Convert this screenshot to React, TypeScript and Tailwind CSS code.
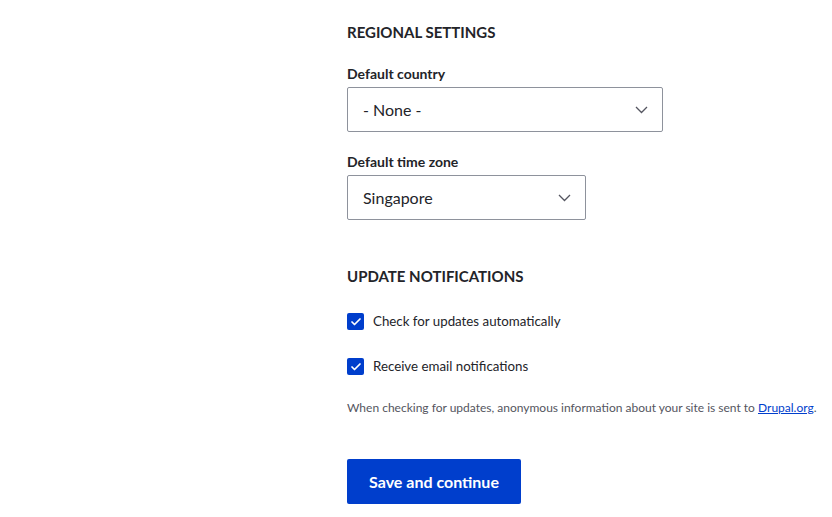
import { Check } from "lucide-react"

function SelectBox({ value, width }: { value: string; width: string }) {
  return (
    <div className={`${width} flex h-[45px] items-center justify-between rounded-[2px] border border-[#8e929c] bg-white pl-[15px] pr-[14px]`}>
      <span className="text-[16px] text-[#232429]">{value}</span>
      <svg width="13" height="8" viewBox="0 0 13 8" fill="none">
        <polyline points="1,1 6.5,6.5 12,1" stroke="#545560" strokeWidth="1.3" />
      </svg>
    </div>
  )
}

function CheckRow({ label }: { label: string }) {
  return (
    <div className="flex h-[17px] items-center gap-[9px]">
      <span className="flex h-[17px] w-[17px] items-center justify-center rounded-[2px] bg-[#003ecc]">
        <Check className="h-[12px] w-[12px] text-white" strokeWidth={3.5} />
      </span>
      <span className="text-[13.3px] leading-[17px] text-[#232429]">{label}</span>
    </div>
  )
}

export default function App() {
  return (
    <div className="min-h-[517px] w-[832px] bg-white font-['Lato',sans-serif] text-[#232429]">
      <div className="pl-[347px] pt-[21px]">
        <h2 className="text-[15px] font-bold leading-[22px]">REGIONAL SETTINGS</h2>

        <div className="mt-[22px]">
          <p className="mb-[4px] text-[14px] font-bold leading-[18px]">Default country</p>
          <SelectBox value="- None -" width="w-[316px]" />
        </div>

        <div className="mt-[21px]">
          <p className="mb-[4px] text-[14px] font-bold leading-[18px]">Default time zone</p>
          <SelectBox value="Singapore" width="w-[239px]" />
        </div>

        <h2 className="mt-[45px] text-[15px] font-bold leading-[22px]">UPDATE NOTIFICATIONS</h2>

        <div className="mt-[26px] flex flex-col gap-[28px]">
          <CheckRow label="Check for updates automatically" />
          <CheckRow label="Receive email notifications" />
        </div>

        <p className="mt-[25px] whitespace-nowrap text-[12px] leading-[16px] text-[#545560]">
          When checking for updates, anonymous information about your site is sent to{" "}
          <a href="#" className="text-[#003ecc] underline">Drupal.org</a>.
        </p>

        <button className="mt-[43px] h-[45px] w-[174px] rounded-[2px] bg-[#003ecc] text-[16px] font-bold text-white">
          Save and continue
        </button>
      </div>
    </div>
  )
}
